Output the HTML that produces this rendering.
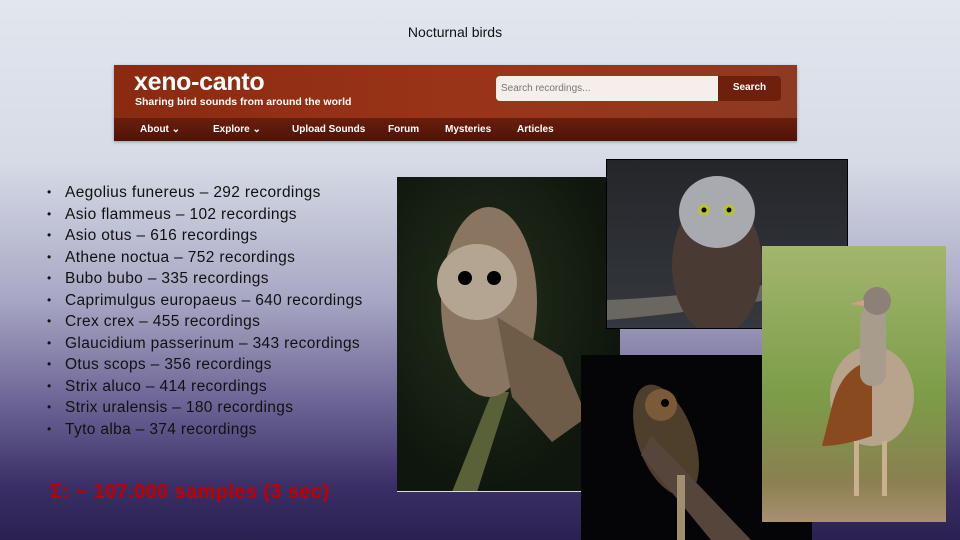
<!DOCTYPE html>
<html><head><meta charset="utf-8"><style>
*{margin:0;padding:0;box-sizing:border-box}
body{width:960px;height:540px;overflow:hidden;position:relative;font-family:"Liberation Sans",sans-serif;
background:linear-gradient(180deg,#e2e6ee 0%,#d6dbe6 30%,#a9a8c4 55%,#6b6394 75%,#3a2f66 90%,#2b2150 100%)}
.title{position:absolute;top:24px;left:0;width:910px;text-align:center;font-size:14px;color:#111}
.banner{position:absolute;left:114px;top:65px;width:683px;height:76px;background:linear-gradient(90deg,#8a2a10,#9a3418 50%,#8e3a22);box-shadow:0 1px 3px rgba(0,0,0,.3)}
.nav{position:absolute;left:0;top:53px;width:100%;height:23px;background:linear-gradient(#6a1e0c,#4e1407);color:#fff;font-size:10px;font-weight:bold}
.nav span{position:absolute;top:6px}
.logo{position:absolute;left:20px;top:3px;color:#fff;font-size:25px;font-weight:bold;letter-spacing:-0.3px}
.tag{position:absolute;left:21px;top:31px;color:#fff;font-size:10.5px;font-weight:bold}
.search{position:absolute;left:382px;top:11px;width:222px;height:25px;background:#f6eeea;border-radius:4px 0 0 4px;font-size:10px;color:#777;padding:7px 5px}
.sbtn{position:absolute;left:604px;top:11px;width:63px;height:25px;background:#6e200c;color:#fff;font-size:10px;font-weight:bold;text-align:center;padding-top:6px;border-radius:0 4px 4px 0}
ul{position:absolute;left:47px;top:182px;list-style:none;font-size:15.5px;letter-spacing:0.35px;color:#111}
li{height:21.5px;line-height:21.5px;position:relative;padding-left:18px}
li:before{content:"•";position:absolute;left:0;font-size:12px}
.sum{position:absolute;left:50px;top:481px;color:#c00000;font-weight:bold;font-size:20px;letter-spacing:0.4px}
.img{position:absolute;overflow:hidden}
</style></head><body>
<div class="title">Nocturnal birds</div>
<div class="banner">
<div class="logo">xeno-canto</div>
<div class="tag">Sharing bird sounds from around the world</div>
<div class="search">Search recordings...</div>
<div class="sbtn">Search</div>
<div class="nav"><span style="left:26px">About ⌄</span><span style="left:99px">Explore ⌄</span><span style="left:178px">Upload Sounds</span><span style="left:274px">Forum</span><span style="left:331px">Mysteries</span><span style="left:403px">Articles</span></div>
</div>
<ul>
<li>Aegolius funereus – 292 recordings</li>
<li>Asio flammeus – 102 recordings</li>
<li>Asio otus – 616 recordings</li>
<li>Athene noctua – 752 recordings</li>
<li>Bubo bubo – 335 recordings</li>
<li>Caprimulgus europaeus – 640 recordings</li>
<li>Crex crex – 455 recordings</li>
<li>Glaucidium passerinum – 343 recordings</li>
<li>Otus scops – 356 recordings</li>
<li>Strix aluco – 414 recordings</li>
<li>Strix uralensis – 180 recordings</li>
<li>Tyto alba – 374 recordings</li>
</ul>
<div class="sum">Σ: ~ 107.000 samples (3 sec)</div>

<div class="img" style="left:397px;top:177px;width:223px;height:315px;background:radial-gradient(ellipse at 40% 40%,#23301c,#0f160d 70%);border-bottom:1px solid #ddd">
<svg width="223" height="315"><path d="M55 315 L95 215 L112 215 L80 315Z" fill="#5a6038"/>
<ellipse cx="92" cy="125" rx="48" ry="95" fill="#8a7560"/><ellipse cx="80" cy="105" rx="40" ry="38" fill="#b4a592"/>
<path d="M100 140 L165 180 L190 240 L155 265 L115 220Z" fill="#6f5c48"/>
<circle cx="68" cy="101" r="7" fill="#000"/><circle cx="97" cy="101" r="7" fill="#000"/></svg></div>

<div class="img" style="left:581px;top:355px;width:231px;height:185px;background:#050507">
<svg width="231" height="185"><ellipse cx="85" cy="85" rx="28" ry="58" fill="#4e3e2c" transform="rotate(-20 85 85)"/>
<path d="M70 80 L170 185 L130 185 L60 100Z" fill="#55453a"/><circle cx="80" cy="50" r="16" fill="#7a5a38"/><circle cx="84" cy="48" r="4" fill="#000"/>
<rect x="96" y="120" width="8" height="65" fill="#a0906e"/></svg></div>

<div class="img" style="left:606px;top:159px;width:242px;height:170px;background:linear-gradient(#24262a,#35383e);border:1px solid #000">
<svg width="242" height="170"><path d="M0 140 Q120 135 242 110 L242 125 Q120 150 0 160Z" fill="#6a6660"/>
<ellipse cx="110" cy="105" rx="45" ry="70" fill="#4a3a34"/><ellipse cx="110" cy="52" rx="38" ry="36" fill="#a8aab0"/>
<circle cx="97" cy="50" r="6" fill="#b8c040"/><circle cx="122" cy="50" r="6" fill="#b8c040"/><circle cx="97" cy="50" r="2.5" fill="#000"/><circle cx="122" cy="50" r="2.5" fill="#000"/></svg></div>

<div class="img" style="left:762px;top:246px;width:184px;height:276px;background:linear-gradient(#a2b66e,#7c9c48 55%,#8a8050 85%,#a89070)">
<svg width="184" height="276"><ellipse cx="110" cy="150" rx="42" ry="50" fill="#b8a48c"/><path d="M70 160 Q80 120 110 115 L110 190 Q80 200 60 200Z" fill="#8a4a20"/>
<rect x="98" y="60" width="26" height="80" rx="12" fill="#a89c8c"/><circle cx="115" cy="55" r="14" fill="#8c8078"/><path d="M102 54 L88 58 L102 60Z" fill="#d49a90"/>
<rect x="92" y="195" width="5" height="55" fill="#c8b090"/><rect x="120" y="195" width="5" height="55" fill="#c8b090"/></svg></div>
</body></html>
